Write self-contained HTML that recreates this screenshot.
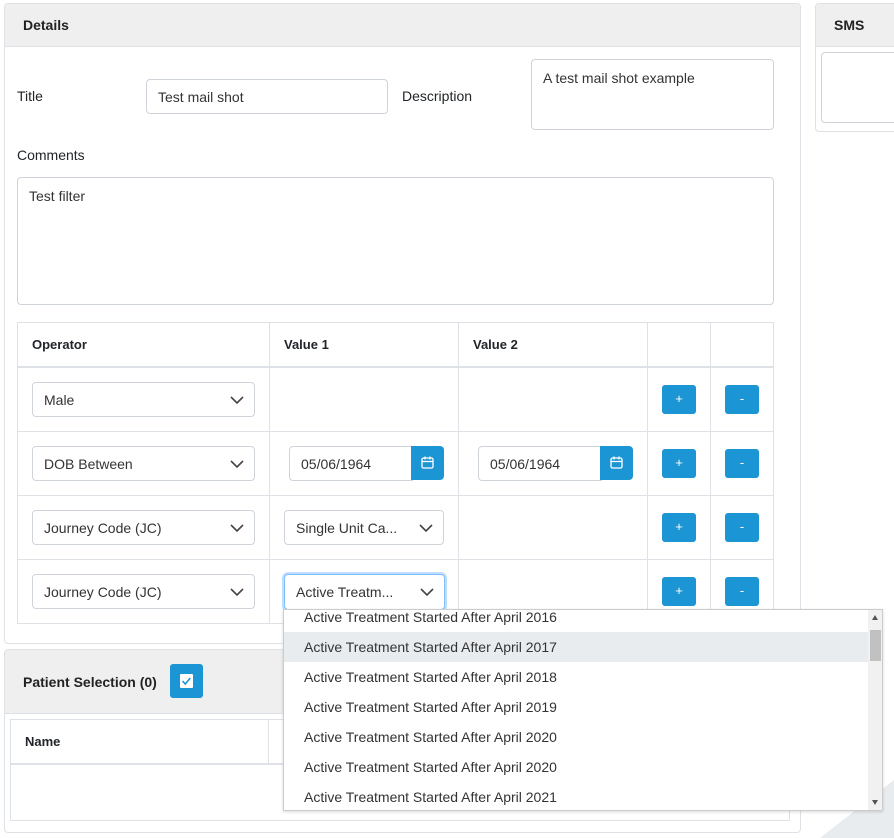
<!DOCTYPE html>
<html><head><meta charset="utf-8"><style>
*{box-sizing:border-box;margin:0;padding:0}
body{width:894px;height:838px;overflow:hidden;background:#fff;font-family:"Liberation Sans",sans-serif;color:#212529;position:relative}
.a{position:absolute}
.card{position:absolute;border:1px solid #dee2e6;border-radius:4px;background:#fff;overflow:hidden}
.hd{position:absolute;left:0;right:0;top:0;background:#efefef;border-bottom:1px solid #dee2e6;font-weight:bold;font-size:14px;color:#222}
.inp{position:absolute;border:1px solid #ced4da;border-radius:4px;background:#fff;font-size:14px;color:#333;padding-left:11px}
.lbl{position:absolute;font-size:14px;color:#212529}
.vl{position:absolute;width:1px;background:#dee2e6}
.hl{position:absolute;height:1px;background:#dee2e6}
.btn{position:absolute;width:34px;height:29px;background:#1b95d3;border-radius:3px;color:#fff;font-size:13px;text-align:center;line-height:28px}
.chev{position:absolute;right:10px;top:10px}
.cal{position:absolute;width:33px;height:34px;background:#1b95d3;border-radius:0 4px 4px 0}
.it{position:absolute;left:20px;font-size:14px;color:#333;height:30px;line-height:30px}
</style></head><body>
<div class="card" style="left:4px;top:3px;width:797px;height:641px">
 <div class="hd" style="height:43px;line-height:43px;padding-left:18px">Details</div>
</div>
<div class="lbl" style="left:17px;top:88px">Title</div>
<div class="inp" style="left:146px;top:79px;width:242px;height:35px;line-height:34px">Test mail shot</div>
<div class="lbl" style="left:402px;top:88px">Description</div>
<div class="inp" style="left:531px;top:59px;width:243px;height:71px;padding-top:10px">A test mail shot example</div>
<div class="lbl" style="left:17px;top:147px">Comments</div>
<div class="inp" style="left:17px;top:177px;width:757px;height:128px;padding-top:10px">Test filter</div>

<div class="a" style="left:17px;top:322px;width:757px;height:302px;border:1px solid #dee2e6"></div>
<div class="hl" style="left:17px;top:366px;width:757px;height:2px"></div>
<div class="hl" style="left:17px;top:431px;width:757px"></div>
<div class="hl" style="left:17px;top:495px;width:757px"></div>
<div class="hl" style="left:17px;top:559px;width:757px"></div>
<div class="vl" style="left:269px;top:322px;height:302px"></div>
<div class="vl" style="left:458px;top:322px;height:302px"></div>
<div class="vl" style="left:647px;top:322px;height:302px"></div>
<div class="vl" style="left:710px;top:322px;height:302px"></div>
<div class="lbl" style="left:32px;top:337px;font-weight:bold;font-size:13px">Operator</div>
<div class="lbl" style="left:284px;top:337px;font-weight:bold;font-size:13px">Value 1</div>
<div class="lbl" style="left:473px;top:337px;font-weight:bold;font-size:13px">Value 2</div>

<svg width="0" height="0" style="position:absolute"><defs><symbol id="cv" viewBox="0 0 14 8"><path d="M1 1l6 6 6-6" fill="none" stroke="#444" stroke-width="1.6"/></symbol></defs></svg>

<div class="inp" style="left:32px;top:382px;width:223px;height:35px;line-height:34px">Male<svg class="chev" width="14" height="14"><use href="#cv" y="3" width="14" height="8"/></svg></div>
<div class="inp" style="left:32px;top:446px;width:223px;height:35px;line-height:34px">DOB Between<svg class="chev" width="14" height="14"><use href="#cv" y="3" width="14" height="8"/></svg></div>
<div class="inp" style="left:32px;top:510px;width:223px;height:35px;line-height:34px">Journey Code (JC)<svg class="chev" width="14" height="14"><use href="#cv" y="3" width="14" height="8"/></svg></div>
<div class="inp" style="left:32px;top:574px;width:223px;height:35px;line-height:34px">Journey Code (JC)<svg class="chev" width="14" height="14"><use href="#cv" y="3" width="14" height="8"/></svg></div>

<div class="inp" style="left:289px;top:446px;width:124px;height:35px;line-height:34px;border-radius:4px 0 0 4px">05/06/1964</div>
<div class="cal" style="left:411px;top:446px"><svg width="33" height="34"><rect x="11" y="12" width="11" height="10" rx="1.5" fill="none" stroke="#fff" stroke-width="1.3"/><path d="M11 15.5h11M14 10.5v3M19 10.5v3" stroke="#fff" stroke-width="1.3"/></svg></div>
<div class="inp" style="left:478px;top:446px;width:124px;height:35px;line-height:34px;border-radius:4px 0 0 4px">05/06/1964</div>
<div class="cal" style="left:600px;top:446px"><svg width="33" height="34"><rect x="11" y="12" width="11" height="10" rx="1.5" fill="none" stroke="#fff" stroke-width="1.3"/><path d="M11 15.5h11M14 10.5v3M19 10.5v3" stroke="#fff" stroke-width="1.3"/></svg></div>

<div class="inp" style="left:284px;top:510px;width:160px;height:35px;line-height:34px">Single Unit Ca...<svg class="chev" width="14" height="14"><use href="#cv" y="3" width="14" height="8"/></svg></div>
<div class="inp" style="left:284px;top:574px;width:161px;height:36px;line-height:34px;border-color:#80bdff;box-shadow:0 0 0 2px rgba(0,123,255,.25)">Active Treatm...<svg class="chev" width="14" height="14"><use href="#cv" y="3" width="14" height="8"/></svg></div>

<div class="btn" style="left:662px;top:385px">+</div><div class="btn" style="left:725px;top:385px">-</div>
<div class="btn" style="left:662px;top:449px">+</div><div class="btn" style="left:725px;top:449px">-</div>
<div class="btn" style="left:662px;top:513px">+</div><div class="btn" style="left:725px;top:513px">-</div>
<div class="btn" style="left:662px;top:577px">+</div><div class="btn" style="left:725px;top:577px">-</div>

<div class="card" style="left:4px;top:649px;width:797px;height:184px">
 <div class="hd" style="height:64px;line-height:64px;padding-left:18px">Patient Selection (0)</div>
</div>
<div class="a" style="left:170px;top:664px;width:33px;height:34px;background:#1b95d3;border-radius:3px"><svg width="33" height="34"><rect x="10" y="10" width="13" height="14" rx="1" fill="#fff"/><path d="M12.5 17l2.8 3 5-6" fill="none" stroke="#1b95d3" stroke-width="1.6"/></svg></div>
<div class="a" style="left:10px;top:719px;width:780px;height:102px;border:1px solid #dee2e6"></div>
<div class="hl" style="left:10px;top:763px;width:780px;height:2px"></div>
<div class="vl" style="left:268px;top:719px;height:45px"></div>
<div class="lbl" style="left:25px;top:734px;font-weight:bold;font-size:13px">Name</div>

<div class="card" style="left:815px;top:3px;width:100px;height:129px">
 <div class="hd" style="height:43px;line-height:43px;padding-left:18px">SMS Templates</div>
</div>
<div class="inp" style="left:821px;top:52px;width:90px;height:71px"></div>

<svg class="a" style="left:800px;top:780px" width="94" height="58"><path d="M20 58L94 0V58Z" fill="#e9ecef"/></svg>

<div class="a" style="left:283px;top:609px;width:600px;height:202px;background:#fff;border:1px solid #ccc;overflow:hidden;box-shadow:0 1px 3px rgba(0,0,0,.15)">
 <div class="a" style="left:0;top:22px;width:584px;height:30px;background:#e9ecef"></div>
 <div class="it" style="top:-8px">Active Treatment Started After April 2016</div>
 <div class="it" style="top:22px">Active Treatment Started After April 2017</div>
 <div class="it" style="top:52px">Active Treatment Started After April 2018</div>
 <div class="it" style="top:82px">Active Treatment Started After April 2019</div>
 <div class="it" style="top:112px">Active Treatment Started After April 2020</div>
 <div class="it" style="top:142px">Active Treatment Started After April 2020</div>
 <div class="it" style="top:172px">Active Treatment Started After April 2021</div>
 <div class="a" style="left:584px;top:0;width:15px;height:200px;background:#f1f1f1"></div>
 <div class="a" style="left:586px;top:20px;width:11px;height:31px;background:#c1c1c1"></div>
 <div class="a" style="left:588px;top:5px;width:0;height:0;border:3.5px solid transparent;border-bottom:5px solid #555;border-top:0"></div>
 <div class="a" style="left:588px;top:190px;width:0;height:0;border:3.5px solid transparent;border-top:5px solid #555;border-bottom:0"></div>
</div>
</body></html>
